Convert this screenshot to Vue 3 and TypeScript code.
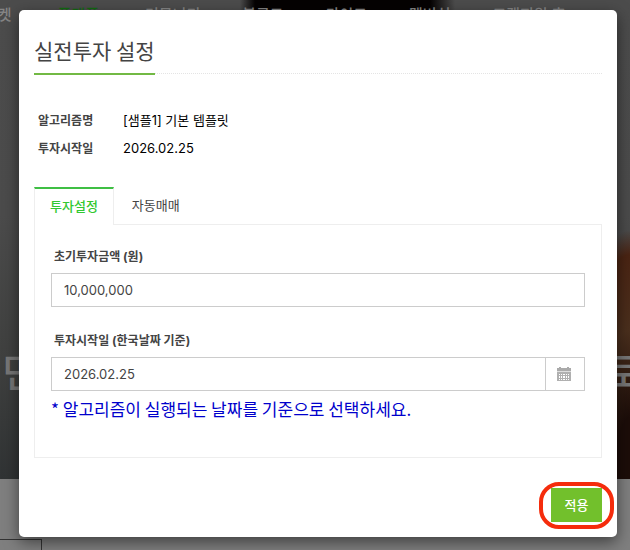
<script setup lang="ts">
import { ref } from 'vue'

const menu: string[] = ['마켓', '플랫폼', '커뮤니티', '블로그', '가이드', '멤버십', '고객지원 홈']
const tabs: string[] = ['투자설정', '자동매매']
const activeTab = ref(0)
const amount = ref('10,000,000')
const startDate = ref('2026.02.25')
</script>

<template>
  <div class="page">
    <header class="hero" aria-hidden="true">
      <nav class="menu">
        <span v-for="(item, i) in menu" :key="item" :class="{ current: i === 1 }">{{ item }}</span>
      </nav>
      <div class="headline"><span>민</span><span>로</span></div>
    </header>
    <div class="below"><div class="box"></div></div>

    <div class="backdrop">
      <section class="dialog" role="dialog" aria-labelledby="dialog-title">
        <div class="title-row"><h1 id="dialog-title">실전투자 설정</h1></div>

        <dl class="summary">
          <dt>알고리즘명</dt>
          <dd>[샘플1] 기본 템플릿</dd>
          <dt>투자시작일</dt>
          <dd>2026.02.25</dd>
        </dl>

        <div class="tabs" role="tablist">
          <button
            v-for="(tab, i) in tabs"
            :key="tab"
            type="button"
            role="tab"
            :aria-selected="activeTab === i"
            :class="['tab', { active: activeTab === i }]"
            @click="activeTab = i"
          >{{ tab }}</button>
        </div>

        <form class="panel" @submit.prevent>
          <label for="amount">초기투자금액 (원)</label>
          <input id="amount" v-model="amount" class="field" type="text" />
          <label for="start-date" class="second">투자시작일 (한국날짜 기준)</label>
          <div class="date-group">
            <input id="start-date" v-model="startDate" class="field" type="text" />
            <button type="button" class="calendar" aria-label="달력">
              <svg width="14" height="14" viewBox="0 0 14 14">
                <path d="M2 0h2v1h6V0h2v1h2v3H0V1h2z" fill="#aaa" />
                <path d="M0 4h14v1H0z" fill="#ddd" />
                <path d="M0 5h14v9H0z" fill="#b0b0b0" />
                <path
                  d="M2 7h1v1H2zM4 7h1v1H4zM6 7h2v1H6zM9 7h1v1H9zM11 7h1v1h-1zM2 9h1v2H2zM4 9h1v2H4zM6 9h2v2H6zM9 9h1v2H9zM11 9h1v2h-1zM2 12h1v1H2zM4 12h1v1H4zM6 12h2v1H6zM9 12h1v1H9zM11 12h1v1h-1z"
                  fill="#fff"
                />
              </svg>
            </button>
          </div>
          <p class="note">* 알고리즘이 실행되는 날짜를 기준으로 선택하세요.</p>
        </form>

        <div class="actions">
          <div class="highlight"><button type="button" class="apply">적용</button></div>
        </div>
      </section>
    </div>
  </div>
</template>

<style>
body {
  margin: 0;
  background: #7f7f7f;
}
</style>

<style scoped>
* {
  box-sizing: border-box;
}
.page {
  position: relative;
  min-height: 100vh;
  overflow: hidden;
  font-family: Inter, 'Noto Sans CJK KR', sans-serif;
}
.hero {
  display: flex;
  flex-direction: column;
  justify-content: space-between;
  height: 479px;
  padding: 4px 0 76px;
  background:
    radial-gradient(ellipse 60px 250px at 100% 480px, #1c0d09 25%, #4a2f1d 60%, #4a2413 90%, transparent 100%),
    linear-gradient(90deg, transparent 240px, #050202 255px, #050202 430px, transparent 455px),
    linear-gradient(#4c4c4c 0, #4b4b4b 45%, #3f403f 75%, #303334 100%);
}
.menu {
  display: flex;
  gap: 42px;
  margin-left: -16px;
  font-size: 15px;
  font-weight: 500;
  line-height: 22px;
  color: #858585;
  white-space: nowrap;
}
.menu .current {
  margin-left: 4px;
  margin-right: 4px;
  color: #126b12;
}
.headline {
  display: flex;
  justify-content: space-between;
  margin: 0 -12px 0 2px;
  font-size: 40px;
  font-weight: 500;
  line-height: 60px;
  color: #777;
}
.below {
  padding-top: 60px;
}
.box {
  width: 42px;
  height: 11px;
  border: 1px solid #333;
  border-width: 1px 1px 0 0;
}
.backdrop {
  position: absolute;
  inset: 0;
  padding: 10px 13px 13px 19px;
}
.dialog {
  padding: 24px 15px 8px;
  border-radius: 5px;
  background: #fff;
  box-shadow: 0 5px 15px rgba(0, 0, 0, 0.5);
}
.title-row {
  display: flex;
  height: 40px;
  border-bottom: 1px dotted #e4e4e4;
}
h1 {
  height: 41px;
  margin: 0;
  border-bottom: 2px solid #72b944;
  font-family: 'Noto Sans CJK KR', sans-serif;
  font-size: 21px;
  font-weight: 400;
  line-height: 32px;
  color: #444;
}
.summary {
  display: grid;
  grid-template-columns: 85px 1fr;
  margin: 32px 4px 25px;
  line-height: 28px;
}
dt {
  padding-top: 1px;
  font-size: 12px;
  font-weight: 700;
  line-height: 27px;
  color: #444;
}
dd {
  margin: 0;
  font-size: 13px;
  color: #000;
}
.tabs {
  display: flex;
  height: 38px;
}
.tab {
  padding: 0 18px 3px;
  border: 0;
  background: none;
  font-family: inherit;
  font-size: 13px;
  color: #444;
}
.tab.active {
  position: relative;
  z-index: 1;
  padding: 0 15px 4px;
  border: 1px solid #eee;
  border-top: 2px solid #3fbf44;
  border-bottom: 0;
  background: #fff;
  font-weight: 500;
  color: #32c832;
}
.panel {
  margin-top: -1px;
  padding: 21px 16px 35px;
  border: 1px solid #eee;
}
label {
  display: block;
  padding-left: 3px;
  margin-bottom: 5px;
  font-size: 12px;
  font-weight: 700;
  line-height: 22px;
  color: #444;
}
.second {
  margin-top: 23px;
}
.field {
  display: block;
  width: 100%;
  height: 34px;
  padding: 0 12px;
  border: 1px solid #ccc;
  border-radius: 0;
  background: #fff;
  font-family: inherit;
  font-size: 13px;
  color: #444;
}
.date-group {
  display: flex;
}
.calendar {
  display: flex;
  flex: none;
  align-items: center;
  justify-content: center;
  width: 39px;
  padding: 0 2px 0 0;
  border: 1px solid #ccc;
  border-left: 0;
  background: #fff;
}
.note {
  margin: 6px 0 0;
  padding-bottom: 2px;
  font-family: 'Noto Sans CJK KR', sans-serif;
  font-size: 17px;
  line-height: 23px;
  color: #00c;
}
.actions {
  display: flex;
  justify-content: flex-end;
  margin: 24px -12px 0 0;
}
.highlight {
  padding: 2px 8px 3px;
  border: 4px solid #f52c0c;
  border-radius: 20px;
}
.apply {
  display: block;
  width: 51px;
  height: 34px;
  padding: 0 0 2px;
  border: 0;
  background: #72c02c;
  font-family: inherit;
  font-size: 13px;
  font-weight: 500;
  color: #fff;
}
</style>
